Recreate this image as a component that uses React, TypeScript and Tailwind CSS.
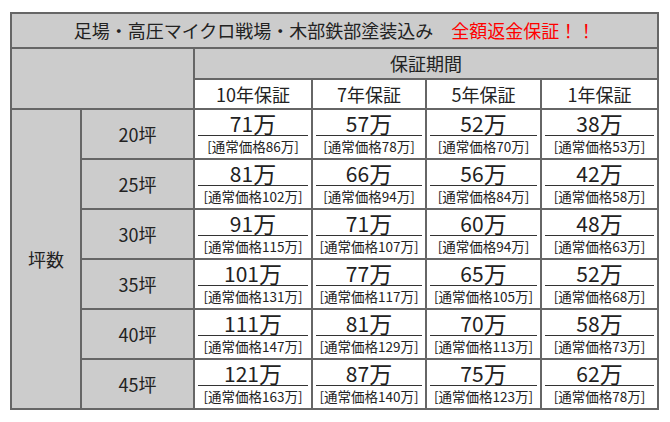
import React from "react";

type Row = { size: string; prices: [string, string][] };

const rows: Row[] = [
  { size: "20坪", prices: [["71", "86"], ["57", "78"], ["52", "70"], ["38", "53"]] },
  { size: "25坪", prices: [["81", "102"], ["66", "94"], ["56", "84"], ["42", "58"]] },
  { size: "30坪", prices: [["91", "115"], ["71", "107"], ["60", "94"], ["48", "63"]] },
  { size: "35坪", prices: [["101", "131"], ["77", "117"], ["65", "105"], ["52", "68"]] },
  { size: "40坪", prices: [["111", "147"], ["81", "129"], ["70", "113"], ["58", "73"]] },
  { size: "45坪", prices: [["121", "163"], ["87", "140"], ["75", "123"], ["62", "78"]] },
];

const periods = ["10年保証", "7年保証", "5年保証", "1年保証"];

const cell = "border-2 border-[#666] p-0";

const PriceCell = ({ price, regular }: { price: string; regular: string }) => (
  <td className={`${cell} bg-white h-[50px] align-top`}>
    <div className="flex flex-col items-center px-[3px] pt-[1px]">
      <div className="w-full border-b border-[#333] flex justify-center items-end h-[25px]">
        <span className="text-[21px] leading-[24px] h-[24px]">{price}</span>
        <span className="text-[23px] leading-[24px] h-[24px]">万</span>
      </div>
      <div className="text-[13.5px] leading-[20px] h-[20px] whitespace-nowrap">[通常価格{regular}万]</div>
    </div>
  </td>
);

export default function App() {
  return (
    <div
      className="w-[670px] h-[422px] bg-white pt-[12px] pl-[10px] text-[#222]"
      style={{ fontFamily: '"Noto Sans CJK JP", "Noto Sans", sans-serif' }}
    >
      <table className="border-collapse table-fixed w-[647px] border-2 border-[#666]">
        <colgroup>
          <col className="w-[70px]" />
          <col className="w-[113px]" />
          <col className="w-[118px]" />
          <col className="w-[114px]" />
          <col className="w-[115px]" />
          <col className="w-[117px]" />
        </colgroup>
        <tbody>
          <tr>
            <td colSpan={6} className={`${cell} bg-[#cccccc] h-[35px] text-center text-[18px]`}>
              足場・高圧マイクロ戦場・木部鉄部塗装込み　<span className="text-[#ff0000]">全額返金保証！！</span>
            </td>
          </tr>
          <tr>
            <td colSpan={2} rowSpan={2} className={`${cell} bg-[#cccccc]`} />
            <td colSpan={4} className={`${cell} bg-[#cccccc] h-[31px] text-center text-[18px]`}>
              保証期間
            </td>
          </tr>
          <tr>
            {periods.map((p) => (
              <td key={p} className={`${cell} bg-white h-[30px] text-center text-[18px] leading-[26px]`}>
                {p}
              </td>
            ))}
          </tr>
          {rows.map((r, i) => (
            <tr key={r.size}>
              {i === 0 && (
                <td rowSpan={6} className={`${cell} bg-[#cccccc] text-center text-[18px]`}>
                  坪数
                </td>
              )}
              <td className={`${cell} bg-[#cccccc] text-center text-[18px]`}>{r.size}</td>
              {r.prices.map(([p, reg], j) => (
                <PriceCell key={j} price={p} regular={reg} />
              ))}
            </tr>
          ))}
        </tbody>
      </table>
    </div>
  );
}
